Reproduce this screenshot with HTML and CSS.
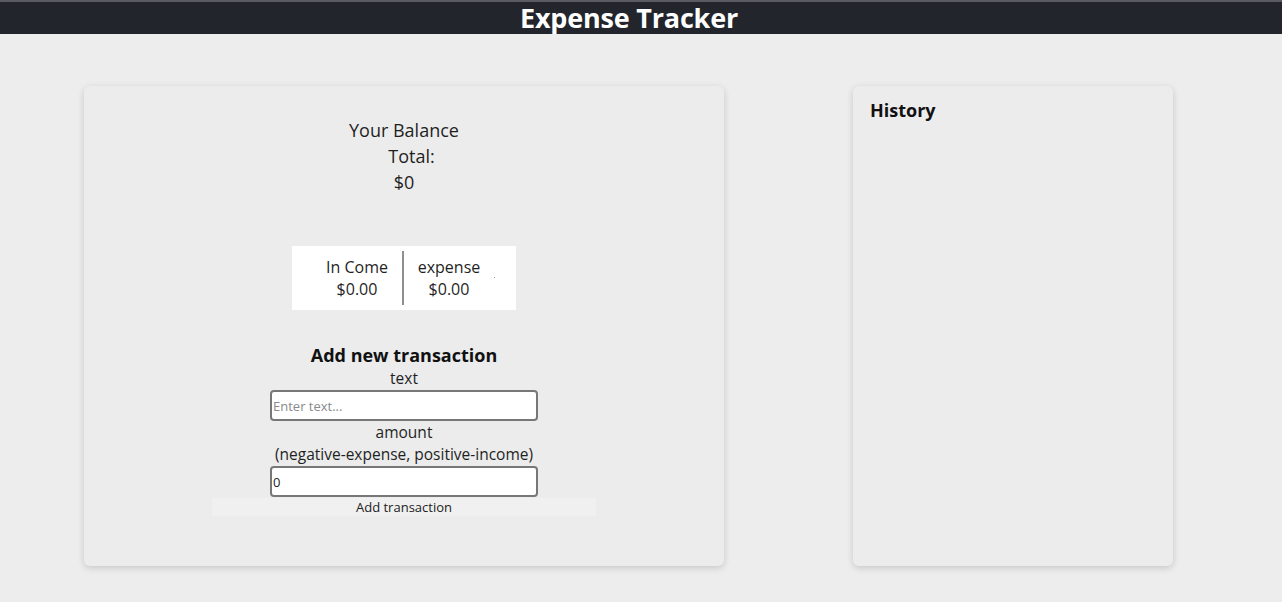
FILE: index.html
```html
<!DOCTYPE html>
<html>
<head>
<meta charset="utf-8">
<link rel="stylesheet" href="styles.css">
</head>
<body>
<header class="topbar"><h1 class="title">Expense Tracker</h1></header>
<main class="layout">
  <section class="card main-card">
    <div class="balance">
      <div class="line">Your Balance</div>
      <div class="line total">Total:</div>
      <div class="line">$0</div>
    </div>
    <div class="summary">
      <div class="col">
        <div>In Come</div>
        <div>$0.00</div>
      </div>
      <div class="divider"></div>
      <div class="col">
        <div>expense</div>
        <div>$0.00</div>
      </div>
      <div class="tail"><span class="dot"></span></div>
    </div>
    <form class="form">
      <h3 class="form-title">Add new transaction</h3>
      <label class="lbl">text</label>
      <input class="field" type="text" placeholder="Enter text...">
      <label class="lbl">amount</label>
      <label class="lbl">(negative-expense, positive-income)</label>
      <input class="field" type="text" value="0">
      <button class="btn" type="button">Add transaction</button>
    </form>
  </section>
  <section class="card history-card">
    <h3 class="history-title">History</h3>
  </section>
</main>
</body>
</html>
```
FILE: styles.css
```css
html, body {
  margin: 0;
  padding: 0;
}
body {
  background: #ededed;
  font-family: "Open Sans", "Lato", sans-serif;
  color: #1f1f1f;
  width: 1282px;
  height: 602px;
  overflow: hidden;
}
.topbar {
  background: #23252c;
  border-top: 2px solid #5a5b60;
  height: 32px;
  display: flex;
  justify-content: center;
  align-items: center;
  padding-right: 24px;
}
.title {
  margin: 0;
  color: #fff;
  font-size: 27px;
  font-weight: 700;
  line-height: 32px;
  letter-spacing: -0.2px;
}
.layout {
  display: flex;
  padding: 52px 0 0 84px;
  gap: 129px;
}
.card {
  background: #ececec;
  border-radius: 6px;
  box-shadow: 0 2px 7px rgba(0, 0, 0, 0.16);
  height: 480px;
  box-sizing: border-box;
}
.main-card {
  width: 640px;
  padding-top: 31px;
  display: flex;
  flex-direction: column;
  align-items: center;
}
.balance {
  display: flex;
  flex-direction: column;
  align-items: center;
  font-size: 18px;
  line-height: 26px;
}
.total {
  padding-left: 15px;
}
.summary {
  margin-top: 51px;
  background: #fff;
  width: 224px;
  height: 64px;
  box-sizing: border-box;
  padding: 5px 0 5px 20px;
  display: flex;
  font-size: 16px;
  line-height: 22px;
}
.col {
  width: 90px;
  display: flex;
  flex-direction: column;
  justify-content: center;
  align-items: center;
}
.divider {
  width: 2px;
  background: #8f8f8f;
}
.tail {
  flex: 1;
  display: flex;
  align-items: center;
}
.dot {
  width: 1px;
  height: 1px;
  background: #9a9a9a;
  margin-top: -2px;
}
.form {
  margin-top: 33px;
  display: flex;
  flex-direction: column;
  align-items: center;
}
.form-title {
  margin: 0;
  font-size: 18px;
  font-weight: 700;
  line-height: 24px;
  color: #111;
}
.lbl {
  font-size: 15.5px;
  line-height: 22px;
}
.field {
  margin-top: 1px;
  width: 268px;
  height: 31px;
  box-sizing: border-box;
  border: 2px solid #777;
  border-radius: 4px;
  background: #fff;
  padding: 0 1px;
  font-family: inherit;
  font-size: 13px;
  color: #222;
  outline: none;
}
.field::placeholder {
  color: #8a8a8a;
}
.btn {
  margin-top: 1px;
  width: 384px;
  height: 18px;
  border: none;
  background: #f0f0f0;
  font-family: inherit;
  font-size: 13px;
  line-height: 18px;
  padding: 0;
  color: #222;
}
.history-card {
  width: 320px;
  padding: 12px 17px;
}
.history-title {
  margin: 0;
  font-size: 18px;
  font-weight: 700;
  line-height: 24px;
  color: #111;
}
```
